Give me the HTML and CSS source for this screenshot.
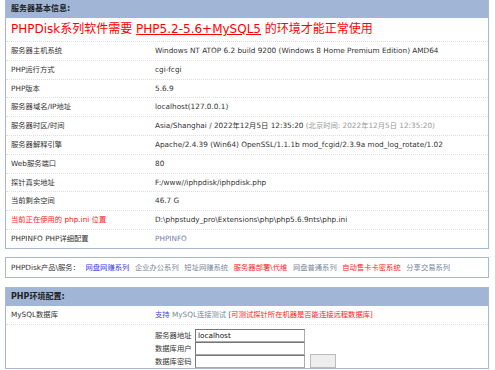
FILE: index.html
```html
<!DOCTYPE html>
<html>
<head>
<meta charset="utf-8">
<link rel="stylesheet" href="styles.css">
</head>
<body>
<div class="page">
  <div class="panel">
    <div class="head">服务器基本信息:</div>
    <div class="notice">PHPDisk系列软件需要 <u>PHP5.2-5.6+MySQL5</u> 的环境才能正常使用</div>
    <div class="row"><div class="k">服务器主机系统</div><div class="v">Windows NT ATOP 6.2 build 9200 (Windows 8 Home Premium Edition) AMD64</div></div>
    <div class="row"><div class="k">PHP运行方式</div><div class="v">cgi-fcgi</div></div>
    <div class="row"><div class="k">PHP版本</div><div class="v">5.6.9</div></div>
    <div class="row"><div class="k">服务器域名/IP地址</div><div class="v">localhost(127.0.0.1)</div></div>
    <div class="row"><div class="k">服务器时区/时间</div><div class="v">Asia/Shanghai / 2022年12月5日 12:35:20 <span class="muted">(北京时间: 2022年12月5日 12:35:20)</span></div></div>
    <div class="row"><div class="k">服务器解释引擎</div><div class="v">Apache/2.4.39 (Win64) OpenSSL/1.1.1b mod_fcgid/2.3.9a mod_log_rotate/1.02</div></div>
    <div class="row"><div class="k">Web服务端口</div><div class="v">80</div></div>
    <div class="row"><div class="k">探针真实地址</div><div class="v">F:/www//iphpdisk/iphpdisk.php</div></div>
    <div class="row"><div class="k">当前剩余空间</div><div class="v">46.7 G</div></div>
    <div class="row"><div class="k red">当前正在使用的 php.ini 位置</div><div class="v">D:\phpstudy_pro\Extensions\php\php5.6.9nts\php.ini</div></div>
    <div class="row last"><div class="k">PHPINFO PHP详细配置</div><div class="v"><span class="info">PHPINFO</span></div></div>
  </div>

  <div class="products">
    <span>PHPDisk产品\服务：</span>
    <span class="blue">网盘网赚系列</span>
    <span class="gray">企业办公系列</span>
    <span class="gray">短址网赚系统</span>
    <span class="red">服务器部署\代维</span>
    <span class="gray">网盘普通系列</span>
    <span class="red">自动售卡卡密系统</span>
    <span class="gray">分享交易系列</span>
  </div>

  <div class="panel">
    <div class="head">PHP环境配置:</div>
    <div class="row"><div class="k">MySQL数据库</div><div class="v"><span class="blue">支持</span> <span class="gray">MySQL连接测试</span> <span class="red">[可测试探针所在机器是否能连接远程数据库]</span></div></div>
    <div class="form">
      <div class="k"></div>
      <div class="fields">
        <div class="field"><span class="fl">服务器地址</span><span class="inp">localhost</span></div>
        <div class="field"><span class="fl">数据库用户</span><span class="inp"></span></div>
        <div class="field"><span class="fl">数据库密码</span><span class="inp"></span><span class="btn"></span></div>
      </div>
    </div>
  </div>
</div>
</body>
</html>
```
FILE: styles.css
```css
html, body {
  margin: 0;
  padding: 0;
  background: #fff;
}
body {
  font-family: "DejaVu Sans", "Noto Sans CJK SC", sans-serif;
  font-size: 7.3px;
  color: #333;
}
.page {
  padding: 0 6px 0 5px;
}
.panel {
  border: 1px solid #a9b8cf;
  border-top: none;
}
.head {
  background: #a1b6d7;
  height: 18px;
  line-height: 18px;
  padding-left: 5px;
  font-weight: bold;
  font-size: 8px;
  color: #222;
}
.notice {
  height: 23px;
  line-height: 23px;
  padding-left: 5px;
  color: #f00;
  font-size: 12px;
  border-bottom: 1px dotted #ddd;
}
.notice u {
  text-underline-offset: 1px;
}
.row {
  display: flex;
  height: 17.8px;
  line-height: 17.8px;
  border-bottom: 1px dotted #ddd;
}
.row.last {
  border-bottom: none;
}
.k {
  width: 144px;
  padding-left: 5px;
  flex: none;
}
.v {
  flex: 1;
  white-space: nowrap;
}
.muted {
  color: #999;
}
.red {
  color: #f22;
}
.blue {
  color: #3a3ae8;
}
.gray {
  color: #7a879a;
}
.info {
  color: #7180b0;
}
.products {
  margin-top: 8px;
  margin-bottom: 9px;
  border: 1px solid #a9b8cf;
  height: 19px;
  line-height: 19px;
  padding-left: 5px;
  white-space: nowrap;
}
.products span {
  margin-right: 3.3px;
}
.panel + .products + .panel {
  border-top: 1px solid #a9b8cf;
}
.form {
  display: flex;
  padding-top: 4px;
}
.fields {
  display: flex;
  flex-direction: column;
}
.field {
  display: flex;
  align-items: center;
  height: 13px;
}
.fl {
  width: 40px;
}
.inp {
  width: 106px;
  height: 11px;
  line-height: 11px;
  border: 1px solid #aaa;
  border-top-color: #777;
  border-left-color: #777;
  padding-left: 2px;
  color: #111;
}
.btn {
  width: 24px;
  height: 12px;
  margin-left: 5px;
  border: 1px solid #bbb;
  background: #eee;
}
```
